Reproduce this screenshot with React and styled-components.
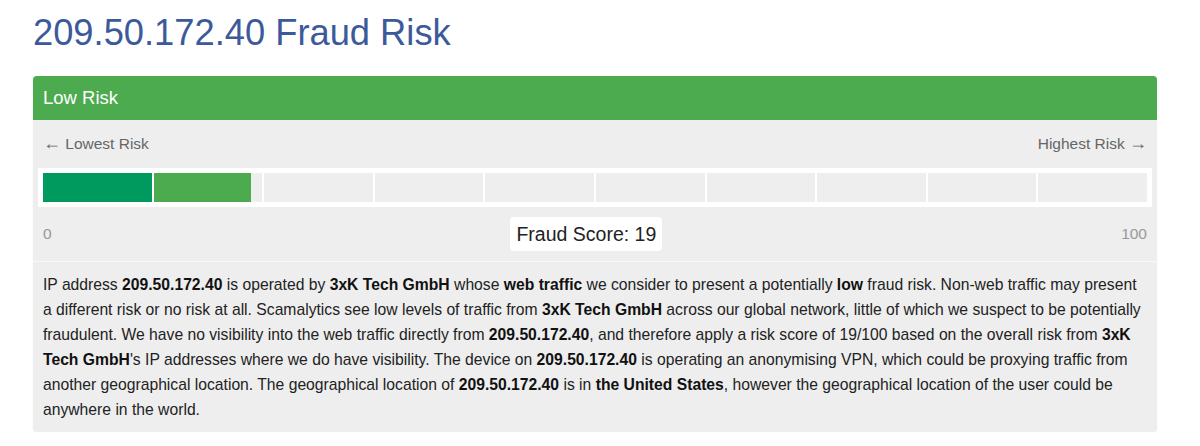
import React from 'react';
import styled, { createGlobalStyle } from 'styled-components';

const GlobalStyle = createGlobalStyle`
  body {
    margin: 0;
    background: #ffffff;
    font-family: "Liberation Sans", Arial, sans-serif;
  }
`;

const Page = styled.div`
  padding: 13px 43px 0 33px;
`;

const Title = styled.h1`
  margin: 0 0 23px 0;
  font-size: 36.3px;
  line-height: 40px;
  font-weight: normal;
  color: #3c5a9a;
`;

const Card = styled.div`
  width: 1124px;
  background: #eeeeee;
  border-radius: 4px;
  overflow: hidden;
  box-shadow: 0 1px 2px rgba(0, 0, 0, 0.06);
`;

const Header = styled.div`
  background: #4caa4f;
  color: #ffffff;
  font-size: 18.5px;
  line-height: 24px;
  padding: 10px 10px;
`;

const Meter = styled.div`
  padding: 10px 5px 0 5px;
`;

const Labels = styled.div`
  display: flex;
  justify-content: space-between;
  padding: 0 5px;
  font-size: 15.5px;
  line-height: 26px;
  color: #666666;
`;

const Arrow = styled.span`
  font-size: 18px;
`;

const Bar = styled.div`
  margin-top: 11px;
  background: #ffffff;
  padding: 5px;
  display: grid;
  grid-template-columns: repeat(10, 1fr);
  gap: 2px;
`;

const Segment = styled.div`
  height: 29px;
  background: #eeeeee;
  position: relative;
`;

const Fill = styled.div`
  position: absolute;
  left: 0;
  top: 0;
  bottom: 0;
  background: ${(p) => (p.$first ? '#009a5e' : '#4caa4f')};
`;

const ScoreRow = styled.div`
  display: flex;
  align-items: center;
  justify-content: space-between;
  padding: 10px 5px 10px 5px;
  font-size: 15.5px;
  color: #999999;
`;

const ScoreBox = styled.div`
  background: #ffffff;
  border-radius: 4px;
  padding: 0 6px;
  font-size: 19.5px;
  line-height: 34px;
  color: #222222;
`;

const Description = styled.p`
  margin: 0;
  border-top: 1px solid #f8f8f8;
  padding: 10px 10px;
  font-size: 15.7px;
  line-height: 25px;
  color: #222222;

  b {
    color: #111111;
  }
`;

const score = 19;

function RiskBar() {
  return (
    <Bar>
      {Array.from({ length: 10 }).map((_, i) => {
        const filled = Math.max(0, Math.min(10, score - i * 10)) * 10;
        return (
          <Segment key={i}>
            {filled > 0 && <Fill $first={i === 0} style={{ width: `${filled}%` }} />}
          </Segment>
        );
      })}
    </Bar>
  );
}

export default function App() {
  return (
    <Page>
      <GlobalStyle />
      <Title>209.50.172.40 Fraud Risk</Title>
      <Card>
        <Header>Low Risk</Header>
        <Meter>
          <Labels>
            <span><Arrow>←</Arrow> Lowest Risk</span>
            <span>Highest Risk <Arrow>→</Arrow></span>
          </Labels>
          <RiskBar />
          <ScoreRow>
            <span>0</span>
            <ScoreBox>Fraud Score: {score}</ScoreBox>
            <span>100</span>
          </ScoreRow>
        </Meter>
        <Description>
          IP address <b>209.50.172.40</b> is operated by <b>3xK Tech GmbH</b> whose <b>web traffic</b> we
          consider to present a potentially <b>low</b> fraud risk. Non-web traffic may present a different
          risk or no risk at all. Scamalytics see low levels of traffic from <b>3xK Tech GmbH</b> across our
          global network, little of which we suspect to be potentially fraudulent. We have no visibility into
          the web traffic directly from <b>209.50.172.40</b>, and therefore apply a risk score of 19/100 based
          on the overall risk from <b>3xK Tech GmbH</b>'s IP addresses where we do have visibility. The
          device on <b>209.50.172.40</b> is operating an anonymising VPN, which could be proxying traffic from
          another geographical location. The geographical location of <b>209.50.172.40</b> is in{' '}
          <b>the United States</b>, however the geographical location of the user could be anywhere in the
          world.
        </Description>
      </Card>
    </Page>
  );
}
